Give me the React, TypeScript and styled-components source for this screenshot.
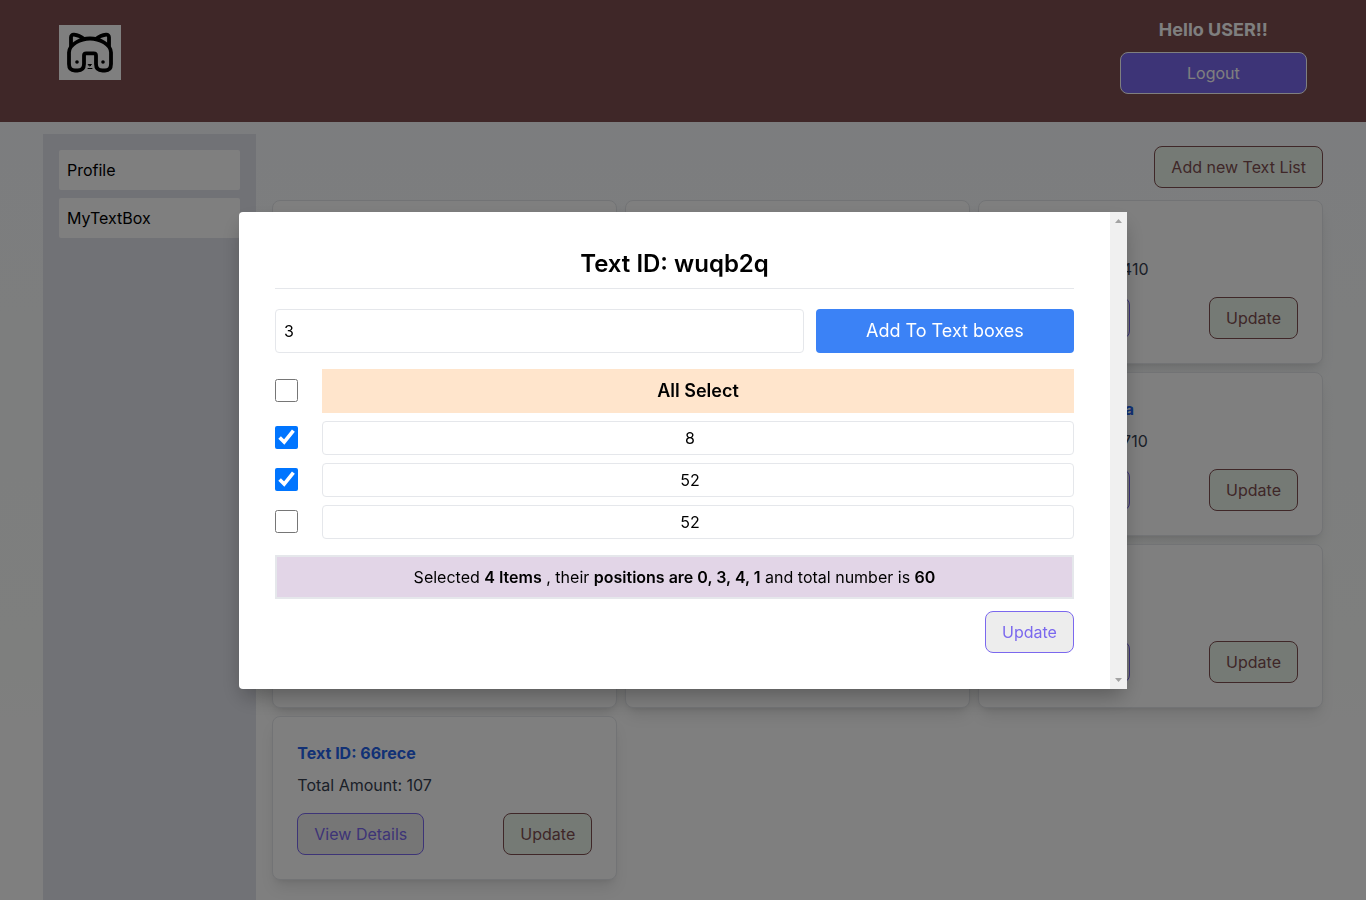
import React, { useState } from "react";
import styled, { createGlobalStyle, css } from "styled-components";

const GlobalStyle = createGlobalStyle`
  *, *::before, *::after { box-sizing: border-box; }
  body {
    margin: 0;
    font-family: Inter, "Liberation Sans", sans-serif;
    font-size: 16px;
    font-weight: 400;
    line-height: 24px;
    color: #000;
  }
  h1, h2, p { margin: 0; }
  button, input { font: inherit; }
`;

const Page = styled.div`
  min-height: 100vh;
  background: linear-gradient(to bottom, #f8fafe, #fcfefc 70%, #fefefe 80%);
`;

const Header = styled.header`
  background: #7e4e50;
`;

const HeaderInner = styled.div`
  display: flex;
  justify-content: space-between;
  align-items: flex-start;
  max-width: 1280px;
  margin: 0 auto;
  padding: 16px 16px 28px;
`;

const LogoLink = styled.a`
  display: block;
  padding-top: 9px;
  svg { display: block; background: #fff; }
`;

const Account = styled.div`
  display: grid;
  gap: 8px;
  width: 15%;
  text-align: center;
`;

const Greeting = styled.p`
  font-size: 18px;
  font-weight: 700;
  line-height: 28px;
  color: #fff;
`;

type Tone = "solid" | "violet" | "maroon";

const tones = {
  solid: css`
    color: #fff;
    background: #7b68ee;
    border-color: #fff;
  `,
  violet: css`
    color: #7b68ee;
    background: #ededed;
    border-color: #7b68ee;
  `,
  maroon: css`
    color: #7e4e50;
    background: #ebf5eb;
    border-color: #7e4e50;
  `,
};

const Button = styled.button<{ $tone: Tone }>`
  padding: 8px 16px;
  border: 1px solid;
  border-radius: 8px;
  cursor: pointer;
  ${({ $tone }) => tones[$tone]}
`;

const Layout = styled.div`
  display: grid;
  grid-template-columns: 1fr 5fr;
  max-width: 1280px;
  min-height: calc(100vh - 122px);
  margin: 0 auto;
  padding-top: 12px;
`;

const Sidebar = styled.nav`
  display: flex;
  flex-direction: column;
  gap: 8px;
  padding: 16px;
  background: #e2e4ec;
`;

const SideLink = styled.a`
  padding: 8px;
  border-radius: 2px;
  background: #fff;
  color: #000;
  text-decoration: none;
`;

const Main = styled.main`
  padding: 12px 0 20px 16px;
`;

const Toolbar = styled.div`
  display: flex;
  justify-content: flex-end;
  margin-bottom: 12px;
`;

const CardGrid = styled.div`
  display: grid;
  grid-template-columns: repeat(3, 1fr);
  gap: 8px;
`;

const Card = styled.article`
  padding: 24px;
  border: 1px solid #e5e7eb;
  border-radius: 8px;
  background: #fff;
  box-shadow: 0 10px 15px -3px rgba(0, 0, 0, 0.1), 0 4px 6px -4px rgba(0, 0, 0, 0.1);
`;

const CardTitle = styled.h2`
  margin-bottom: 8px;
  font-size: 16px;
  font-weight: 700;
  line-height: 24px;
  color: #2563eb;
`;

const CardText = styled.p`
  margin-bottom: 16px;
  color: #374151;
`;

const CardActions = styled.div`
  display: flex;
  justify-content: space-between;
`;

const Overlay = styled.div`
  position: fixed;
  inset: 0;
  display: flex;
  align-items: center;
  justify-content: center;
  background: rgba(0, 0, 0, 0.5);
`;

const Dialog = styled.section`
  display: flex;
  width: 65%;
  border-radius: 4px 0 0 4px;
  background: #fff;
  box-shadow: 0 10px 20px -4px rgba(0, 0, 0, 0.3);
`;

const DialogBody = styled.div`
  flex: 1;
  padding: 36px;
`;

const ScrollRail = styled.div`
  display: flex;
  flex-direction: column;
  justify-content: space-between;
  align-items: center;
  width: 17px;
  padding: 7px 0;
  background: #f0f0f0;
  svg { display: block; }
`;

const DialogTitle = styled.h1`
  padding-bottom: 8px;
  border-bottom: 1px solid #e5e7eb;
  font-size: 24px;
  font-weight: 600;
  line-height: 32px;
  text-align: center;
`;

const AddForm = styled.form`
  display: grid;
  grid-template-columns: minmax(0, 1fr) 258px;
  gap: 12px;
  margin: 20px 0 16px;
`;

const NumberField = styled.input`
  min-width: 0;
  height: 44px;
  padding: 8px;
  border: 1px solid #e5e7eb;
  border-radius: 4px;
  color: #000;
`;

const AddButton = styled.button`
  border: 0;
  border-radius: 4px;
  background: #3b82f6;
  color: #fff;
  font-size: 18px;
  cursor: pointer;
`;

const Rows = styled.div`
  display: grid;
  gap: 8px;
  margin-bottom: 16px;
`;

const Row = styled.label`
  display: grid;
  grid-template-columns: 23px 1fr;
  align-items: center;
  gap: 24px;
  text-align: center;
`;

const Check = styled.input`
  width: 23px;
  height: 23px;
  margin: 0;
`;

const AllLabel = styled.span`
  padding: 8px;
  background: #ffe5cc;
  font-size: 18px;
  font-weight: 600;
  line-height: 28px;
`;

const Value = styled.span`
  padding: 4px 16px 4px 0;
  border: 1px solid #e5e7eb;
  border-radius: 4px;
`;

const Summary = styled.p`
  margin-bottom: 12px;
  padding: 8px;
  border: 2px solid #e5e7eb;
  background: #e2d5e7;
  text-align: center;
  strong { font-weight: 600; }
`;

const DialogActions = styled.div`
  display: flex;
  justify-content: flex-end;
`;

const Logo = () => (
  <svg width="62" height="55" viewBox="0 0 62 55" fill="none" stroke="#000" strokeWidth="3.8" strokeLinejoin="round" strokeLinecap="round" role="img" aria-label="Home">
    <path d="M25 39V30.500Q25 28.300 27.200 28.300H34.800Q37 28.300 37 30.500V39Q37 45.500 43.500 45.500H46Q52 45.500 52 39V27.500C52 19.500 40.500 13.500 31 13.500S10 19.500 10 27.500V39Q10 45.500 16 45.500H18.500Q25 45.500 25 39Z" />
    <path d="M12 20.500V12.500Q12 9.500 15 9.700Q20.500 10.200 25 14M50 20.500V12.500Q50 9.500 47 9.700Q41.500 10.200 37 14" />
    <circle cx="18" cy="37" r="1.8" fill="#000" stroke="none" />
    <circle cx="44" cy="37" r="1.8" fill="#000" stroke="none" />
    <path d="M29.500 39.500H32.500L31 41ZM29 43.500H33" strokeWidth="1" fill="#000" />
  </svg>
);

const cards = [
  { id: "wuqb2q", total: 112 },
  { id: "k8x2ne", total: 245 },
  { id: "p4t7sd", total: 2410 },
  { id: "v9c3ul", total: 318 },
  { id: "r5h6yo", total: 96 },
  { id: "wmqe0a", total: 2710 },
  { id: "b7j1ze", total: 154 },
  { id: "d2f8gi", total: 203 },
  { id: "n6s4xt", total: 8 },
  { id: "66rece", total: 107 },
];

export default function App() {
  const values = [8, 52, 52];
  const [checked, setChecked] = useState([true, true, false]);
  const [amount, setAmount] = useState("3");
  const toggle = (index: number) =>
    setChecked((list) => list.map((on, i) => (i === index ? !on : on)));
  const all = checked.every(Boolean);

  return (
    <>
      <GlobalStyle />
      <Page>
        <Header>
          <HeaderInner>
            <LogoLink href="#home"><Logo /></LogoLink>
            <Account>
              <Greeting>Hello USER!!</Greeting>
              <Button $tone="solid">Logout</Button>
            </Account>
          </HeaderInner>
        </Header>
        <Layout>
          <Sidebar>
            <SideLink href="#profile">Profile</SideLink>
            <SideLink href="#textbox">MyTextBox</SideLink>
          </Sidebar>
          <Main>
            <Toolbar>
              <Button $tone="maroon">Add new Text List</Button>
            </Toolbar>
            <CardGrid>
              {cards.map((card) => (
                <Card key={card.id}>
                  <CardTitle>Text ID: {card.id}</CardTitle>
                  <CardText>Total Amount: {card.total}</CardText>
                  <CardActions>
                    <Button $tone="violet">View Details</Button>
                    <Button $tone="maroon">Update</Button>
                  </CardActions>
                </Card>
              ))}
            </CardGrid>
          </Main>
        </Layout>
      </Page>
      <Overlay>
        <Dialog role="dialog" aria-modal="true" aria-labelledby="dialog-title">
          <DialogBody>
            <DialogTitle id="dialog-title">Text ID: wuqb2q</DialogTitle>
            <AddForm onSubmit={(event) => event.preventDefault()}>
              <NumberField aria-label="Number" value={amount} onChange={(event) => setAmount(event.target.value)} />
              <AddButton type="submit">Add To Text boxes</AddButton>
            </AddForm>
            <Rows>
              <Row>
                <Check type="checkbox" checked={all} onChange={() => setChecked(values.map(() => !all))} />
                <AllLabel>All Select</AllLabel>
              </Row>
              {values.map((value, index) => (
                <Row key={index}>
                  <Check type="checkbox" checked={checked[index]} onChange={() => toggle(index)} />
                  <Value>{value}</Value>
                </Row>
              ))}
            </Rows>
            <Summary>
              Selected <strong>4 Items</strong> , their <strong>positions are 0, 3, 4, 1</strong> and total number is <strong>60</strong>
            </Summary>
            <DialogActions>
              <Button $tone="violet">Update</Button>
            </DialogActions>
          </DialogBody>
          <ScrollRail aria-hidden="true">
            <svg width="7" height="4" viewBox="0 0 7 4"><path d="M0 4L3.500 0L7 4Z" fill="#a3a3a3" /></svg>
            <svg width="7" height="4" viewBox="0 0 7 4"><path d="M0 0L3.500 4L7 0Z" fill="#a3a3a3" /></svg>
          </ScrollRail>
        </Dialog>
      </Overlay>
    </>
  );
}
